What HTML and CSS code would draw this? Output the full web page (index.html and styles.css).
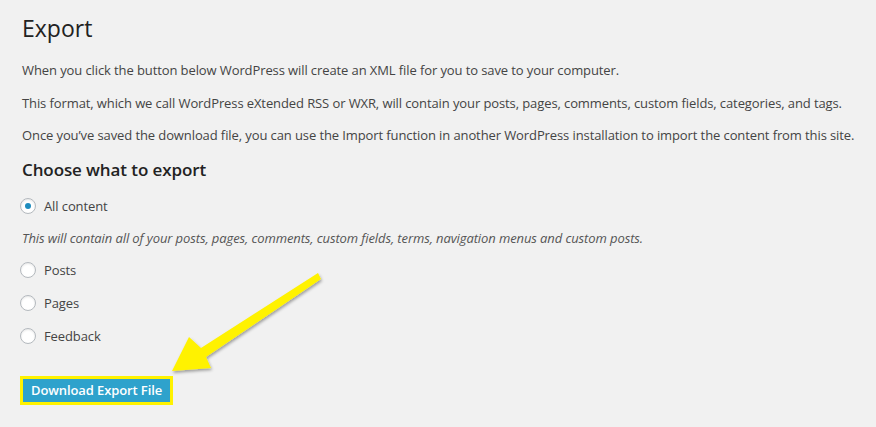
FILE: index.html
```html
<!DOCTYPE html>
<html lang="en">

<head>
    <meta charset="UTF-8">
    <meta name="viewport" content="width=device-width, initial-scale=1.0">
    <title>Export</title>
    <link rel="stylesheet" href="styles.css">
</head>

<body>
    <div class="wrap">
        <h2>Export</h2>
        <p>When you click the button below WordPress will create an XML file for you to save to your computer.</p>
        <p>This format, which we call WordPress eXtended RSS or WXR, will contain your posts, pages, comments, custom fields, categories, and tags.</p>
        <p>Once you’ve saved the download file, you can use the Import function in another WordPress installation to import the content from this site.</p>

        <h3>Choose what to export</h3>
        <form class="export-form">
            <label class="choice"><span class="radio checked"></span>All content</label>
            <p class="description">This will contain all of your posts, pages, comments, custom fields, terms, navigation menus and custom posts.</p>
            <label class="choice"><span class="radio"></span>Posts</label>
            <label class="choice"><span class="radio"></span>Pages</label>
            <label class="choice"><span class="radio"></span>Feedback</label>

            <div class="submit">
                <span class="highlight"><button type="button" class="button-primary">Download Export File</button></span>
            </div>
        </form>
    </div>

    <svg class="arrow" width="876" height="427" viewBox="0 0 876 427">
        <defs>
            <filter id="shadow" x="-20%" y="-20%" width="140%" height="140%">
                <feDropShadow dx="1" dy="2" stdDeviation="1.5" flood-color="#000" flood-opacity="0.35" />
            </filter>
        </defs>
        <polygon points="172,371 189,337 201,348 318,273 321,279 206,357 211,368" fill="#fff200" filter="url(#shadow)" />
    </svg>
</body>

</html>
```

FILE: styles.css
```css
body {
    margin: 0;
    background-color: #f1f1f1;
    color: #444;
    font-family: "Open Sans", sans-serif;
    font-size: 13px;
    line-height: 1.5;
    letter-spacing: -0.1px;
}

.wrap {
    padding: 14px 20px 0 22px;
}

h2 {
    margin: 0 0 18px;
    font-size: 23px;
    font-weight: 400;
    line-height: 29px;
    color: #222;
    letter-spacing: 0;
}

p {
    margin: 0 0 13px;
}

h3 {
    margin: 12px 0 15px;
    font-size: 17px;
    font-weight: 600;
    line-height: 1.3;
    color: #222;
    letter-spacing: -0.1px;
}

.export-form {
    display: flex;
    flex-direction: column;
    align-items: flex-start;
}

.choice {
    display: flex;
    align-items: center;
    gap: 8px;
    margin-left: -2px;
    margin-bottom: 13px;
    line-height: 20px;
}

.radio {
    width: 14px;
    height: 14px;
    border: 1px solid #b4b9be;
    border-radius: 50%;
    background-color: #fff;
    box-shadow: inset 0 1px 2px rgba(0, 0, 0, 0.1);
    display: flex;
    align-items: center;
    justify-content: center;
}

.radio.checked::after {
    content: "";
    width: 6px;
    height: 6px;
    border-radius: 50%;
    background-color: #1e8cbe;
}

.description {
    font-style: italic;
    color: #555;
    margin: 0 0 12px;
}

.submit {
    margin-top: 17px;
}

.highlight {
    display: inline-block;
    border: 3px solid #fff200;
    margin-left: -2px;
}

.button-primary {
    display: block;
    height: 23px;
    padding: 0 8px;
    border: 0;
    background-color: #2ea2cc;
    color: #fff;
    font-family: "Open Sans", sans-serif;
    font-size: 13px;
    font-weight: 600;
    line-height: 23px;
    letter-spacing: -0.1px;
    cursor: pointer;
}

.arrow {
    position: absolute;
    top: 0;
    left: 0;
    pointer-events: none;
}
```
